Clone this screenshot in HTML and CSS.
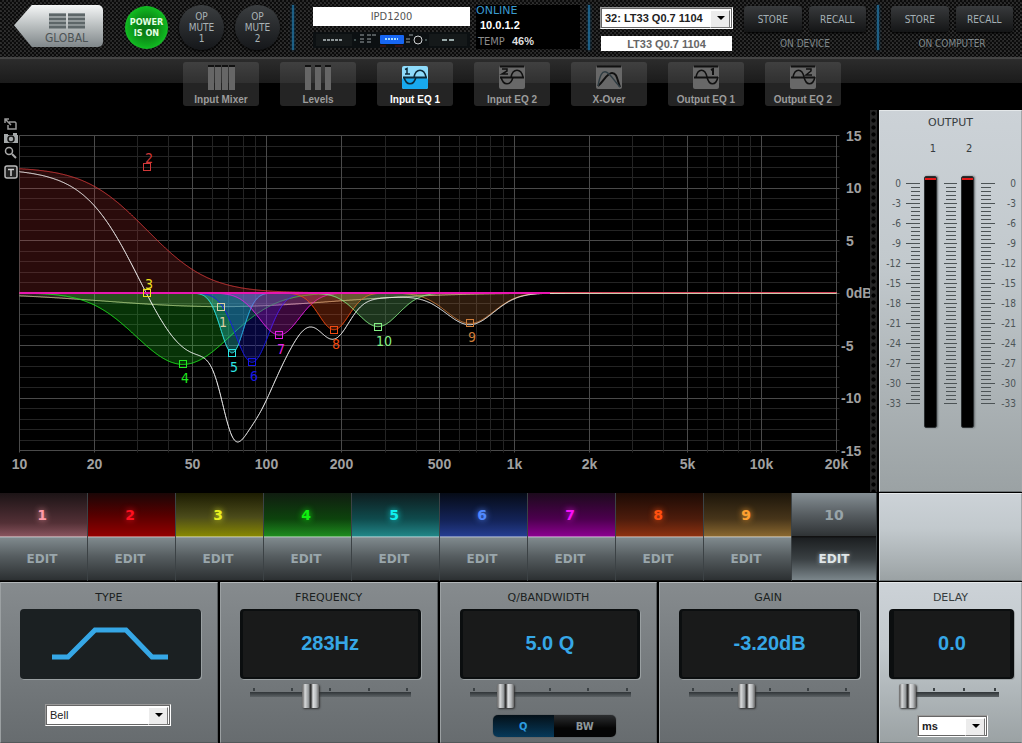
FILE: index.html
```html
<!DOCTYPE html>
<html lang="en">
<head>
  <meta charset="UTF-8">
  <meta name="viewport" content="width=device-width, initial-scale=1.0">
  <title>IPD1200 - Input EQ 1</title>
  <link rel="stylesheet" href="styles.css">
</head>
<body>
  <header class="topbar">
    <button class="global-btn" type="button">
      <svg width="36" height="16" viewBox="0 0 36 16">
        <path d="M0 2h17M19 2h17M0 6h17M19 6h17M0 10h17M19 10h17M0 14h17M19 14h17" stroke="#5d6668" stroke-width="3"/>
        <path d="M0 0.5h17M19 0.5h17" stroke="#8a9294" stroke-width="1"/>
      </svg>
      <span>GLOBAL</span>
    </button>
    <div class="power-group">
      <button class="round power" type="button">POWER<br>IS ON</button>
      <button class="round mute" type="button">OP<br>MUTE<br>1</button>
      <button class="round mute" type="button">OP<br>MUTE<br>2</button>
    </div>
    <div class="divider"></div>
    <div class="device">
      <input class="device-name" type="text" value="IPD1200" aria-label="Device name">
      <svg class="rack" viewBox="0 0 157 16">
        <rect width="157" height="16" rx="1" fill="#0c1012"/>
        <rect x="3" y="2" width="36" height="12" fill="#15191a"/>
        <rect x="116" y="2" width="38" height="12" fill="#15191a"/>
        <path d="M10 8h20" stroke="#8e9698" stroke-width="2" stroke-dasharray="3 1"/>
        <path d="M129 8h14" stroke="#9aa" stroke-width="2" stroke-dasharray="5 2"/>
        <path d="M47 3h4M54 3h4M59 3h4M47 7h4M54 7h4M47 10h4M54 10h4M96 3h4M93 7h4M93 10h4" stroke="#99a1a4" stroke-width="1"/>
        <rect x="67" y="3" width="24" height="9" rx="1" fill="#1766f2"/>
        <path d="M72 7h13" stroke="#a5ddff" stroke-width="2" stroke-dasharray="2 1"/>
        <circle cx="105" cy="8" r="4" fill="#111" stroke="#cfd3d5" stroke-width="1"/>
        <path d="M67 14h6M82 14h8" stroke="#5a1515" stroke-width="1"/>
        <circle cx="42" cy="8" r="1" fill="#566"/>
        <circle cx="113" cy="8" r="1" fill="#566"/>
      </svg>
    </div>
    <div class="status">
      <div class="online">ONLINE</div>
      <div class="address">10.0.1.2</div>
      <div class="temp">TEMP <b>46%</b></div>
    </div>
    <div class="divider"></div>
    <div class="preset">
      <div class="combo">
        <select aria-label="Preset"><option>32: LT33 Q0.7 1104</option></select>
      </div>
      <input class="preset-name" type="text" value="LT33 Q0.7 1104" aria-label="Preset name">
    </div>
    <div class="storage">
      <div class="storage-btns">
        <button type="button">STORE</button>
        <button type="button">RECALL</button>
      </div>
      <div class="storage-label">ON DEVICE</div>
    </div>
    <div class="divider"></div>
    <div class="storage">
      <div class="storage-btns">
        <button type="button">STORE</button>
        <button type="button">RECALL</button>
      </div>
      <div class="storage-label">ON COMPUTER</div>
    </div>
  </header>

  <nav class="tabs">
    <button type="button">
      <svg width="28" height="26" viewBox="0 0 28 26">
        <path d="M1 0h6v25h-6zM8 0h6v25h-6zM15 0h6v25h-6zM22 0h6v25h-6z" fill="#666"/>
        <path d="M1 1h6M8 1h6M15 1h6M22 1h6" stroke="#111" stroke-width="2"/>
      </svg>
      Input Mixer
    </button>
    <button type="button">
      <svg width="28" height="26" viewBox="0 0 28 26">
        <path d="M1 0h6v25h-6zM11 0h6v25h-6zM21 0h6v25h-6z" fill="#666"/>
        <path d="M1 1h6M11 1h6M21 1h6" stroke="#111" stroke-width="2"/>
      </svg>
      Levels
    </button>
    <button class="active" type="button">
      <svg width="26" height="26" viewBox="0 0 26 26">
        <rect y="1" width="26" height="23" rx="2" fill="#8edbfb"/>
        <rect y="13" width="26" height="11" rx="2" fill="#18a9ee"/>
        <path d="M1 12.500h24" stroke="#0c2a3a" stroke-width="2"/>
        <path d="M2 12c2 9 10 9 12 0M12 12c2-9 10-9 12 0" fill="none" stroke="#0c2a3a" stroke-width="1.500"/>
        <path d="M3 4.500l2-1v6M3 9h5" fill="none" stroke="#0c2a3a" stroke-width="1.500"/>
      </svg>
      Input EQ 1
    </button>
    <button type="button">
      <svg width="26" height="26" viewBox="0 0 26 26">
        <rect y="1" width="26" height="23" rx="2" fill="#686868"/>
        <path d="M1 1.500h24" stroke="#111" stroke-width="2"/>
        <path d="M1 12.500h24" stroke="#111" stroke-width="2"/>
        <path d="M2 12c2 9 10 9 12 0M12 12c2-9 10-9 12 0" fill="none" stroke="#111" stroke-width="1.500"/>
        <path d="M3 4h5v2L3 9h6" fill="none" stroke="#111" stroke-width="1.500"/>
      </svg>
      Input EQ 2
    </button>
    <button type="button">
      <svg width="26" height="26" viewBox="0 0 26 26">
        <rect y="1" width="26" height="23" rx="2" fill="#686868"/>
        <path d="M1 1.500h24" stroke="#111" stroke-width="2"/>
        <path d="M2 21C8 16 11 8 16 8s5 6 8 14" fill="none" stroke="#111" stroke-width="2"/>
        <path d="M2 21C4 10 6 6 10 7s9 10 14 15" fill="none" stroke="#2f3c42" stroke-width="1.500"/>
      </svg>
      X-Over
    </button>
    <button type="button">
      <svg width="26" height="26" viewBox="0 0 26 26">
        <rect y="1" width="26" height="23" rx="2" fill="#686868"/>
        <path d="M1 1.500h24" stroke="#111" stroke-width="2"/>
        <path d="M1 12.500h24" stroke="#111" stroke-width="2"/>
        <path d="M3 12c2-9 9-9 11 0c2 9 9 9 11 0" fill="none" stroke="#111" stroke-width="1.500"/>
        <path d="M18 5l2-1v6" fill="none" stroke="#111" stroke-width="2"/>
      </svg>
      Output EQ 1
    </button>
    <button type="button">
      <svg width="26" height="26" viewBox="0 0 26 26">
        <rect y="1" width="26" height="23" rx="2" fill="#686868"/>
        <path d="M1 1.500h24" stroke="#111" stroke-width="2"/>
        <path d="M1 12.500h24" stroke="#111" stroke-width="2"/>
        <path d="M3 12c2-9 9-9 11 0c2 9 9 9 11 0" fill="none" stroke="#111" stroke-width="1.500"/>
        <path d="M16 4h5v2l-5 4h6" fill="none" stroke="#111" stroke-width="1.500"/>
      </svg>
      Output EQ 2
    </button>
  </nav>

  <main class="workspace">
    <section class="graph">
      <svg id="plot" viewBox="0 0 870 382"></svg>
      <div class="tools">
        <button type="button" aria-label="Resize">
          <svg width="14" height="13" viewBox="0 0 14 13"><path d="M5 4h6l1 1v6H4V7M1 1l6 6M1 5V1h4" fill="none" stroke="#999" stroke-width="1.500"/></svg>
        </button>
        <button type="button" aria-label="Snapshot">
          <svg width="14" height="11" viewBox="0 0 14 11"><path d="M0 1h4v1h5V0h4v2h1v8H0z" fill="#a5a9aa"/><circle cx="7" cy="6" r="3" fill="#a5a9aa" stroke="#111" stroke-width="1.500"/></svg>
        </button>
        <button type="button" aria-label="Zoom">
          <svg width="14" height="13" viewBox="0 0 14 13"><circle cx="5" cy="5" r="3.500" fill="none" stroke="#aaa" stroke-width="1.500"/><path d="M8 8l4 4" stroke="#aaa" stroke-width="2"/></svg>
        </button>
        <button class="text-tool" type="button" aria-label="Labels">
          <svg width="14" height="14" viewBox="0 0 14 14"><rect x="1" y="1" width="12" height="12" rx="2" fill="#222" stroke="#bbb" stroke-width="1.500"/><path d="M4 4.500h6M7 4v7" stroke="#ccc" stroke-width="1.500"/></svg>
        </button>
      </div>
      <div class="mesh"></div>
    </section>

    <section class="panel light output">
      <h2>OUTPUT</h2>
      <div class="channels"><span>1</span><span>2</span></div>
      <div class="meters">
        <div class="db"></div>
        <div class="scale left"></div>
        <div class="meter"></div>
        <div class="scale middle"></div>
        <div class="meter"></div>
        <div class="scale right"></div>
        <div class="db"></div>
      </div>
    </section>

    <section class="bands">
      <div class="band b1"><button type="button">1</button><button class="edit" type="button">EDIT</button></div>
      <div class="band b2"><button type="button">2</button><button class="edit" type="button">EDIT</button></div>
      <div class="band b3"><button type="button">3</button><button class="edit" type="button">EDIT</button></div>
      <div class="band b4"><button type="button">4</button><button class="edit" type="button">EDIT</button></div>
      <div class="band b5"><button type="button">5</button><button class="edit" type="button">EDIT</button></div>
      <div class="band b6"><button type="button">6</button><button class="edit" type="button">EDIT</button></div>
      <div class="band b7"><button type="button">7</button><button class="edit" type="button">EDIT</button></div>
      <div class="band b8"><button type="button">8</button><button class="edit" type="button">EDIT</button></div>
      <div class="band b9"><button type="button">9</button><button class="edit" type="button">EDIT</button></div>
      <div class="band b10"><button type="button">10</button><button class="edit current" type="button">EDIT</button></div>
    </section>

    <div class="panel light"></div>

    <section class="controls">
      <div class="panel dark">
        <h2><label for="type">TYPE</label></h2>
        <div class="screen type-screen">
          <svg width="116" height="34" viewBox="0 0 116 34"><path d="M0 31h16L43 4h31l26 27h16" fill="none" stroke="#36a7e6" stroke-width="5"/></svg>
        </div>
        <div class="combo type-combo">
          <select id="type"><option>Bell</option></select>
        </div>
      </div>
      <div class="panel dark">
        <h2><label for="frequency">FREQUENCY</label></h2>
        <output class="screen" for="frequency">283Hz</output>
        <div class="slider">
          <div class="ticks"><i></i><i></i><i></i><i></i><i></i></div>
          <input id="frequency" type="range" min="0" max="100" value="36">
        </div>
      </div>
      <div class="panel dark">
        <h2><label for="q">Q/BANDWIDTH</label></h2>
        <output class="screen" for="q">5.0 Q</output>
        <div class="slider">
          <div class="ticks"><i></i><i></i><i></i><i></i><i></i></div>
          <input id="q" type="range" min="0" max="100" value="19">
        </div>
        <div class="toggle">
          <button class="on" type="button">Q</button><button type="button">BW</button>
        </div>
      </div>
      <div class="panel dark">
        <h2><label for="gain">GAIN</label></h2>
        <output class="screen" for="gain">-3.20dB</output>
        <div class="slider">
          <div class="ticks"><i></i><i></i><i></i><i></i><i></i></div>
          <input id="gain" type="range" min="0" max="100" value="34">
        </div>
      </div>
    </section>

    <section class="panel light delay">
      <h2><label for="delay">DELAY</label></h2>
      <output class="screen" for="delay">0.0</output>
      <div class="slider">
        <div class="ticks"><i></i><i></i><i></i><i></i></div>
        <input id="delay" type="range" min="0" max="100" value="0">
      </div>
      <div class="combo delay-combo">
        <select aria-label="Delay unit"><option>ms</option></select>
      </div>
    </section>
  </main>

  <script src="graph.js"></script>
</body>
</html>
```

FILE: graph.js
```js
const LEFT = 19.5, RIGHT = 836.5, TOP = 25.5, BOTTOM = 340.5;
const DECADE = (RIGHT - LEFT) / Math.log10(2000);
const PX_DB = (BOTTOM - TOP) / 30;

const xOf = f => LEFT + DECADE * Math.log10(f / 10);
const yOf = db => TOP + (15 - db) * PX_DB;

// width is the spread of the bell in decades
const bands = [
  { n: 1, freq: 65, gain: -1.3, width: 0.46, color: "#dccfa5", fill: 0.18, label: [2, 20] },
  { n: 2, freq: 32.7, gain: 12, shelf: true, color: "#d03838", fill: 0.2, label: [2, -4] },
  { n: 3, freq: 32.7, gain: 0, width: 0.1, color: "#f0e020", fill: 0, label: [2, -4] },
  { n: 4, freq: 45.8, gain: -6.8, width: 0.19, color: "#1fe81f", fill: 0.22, label: [2, 19] },
  { n: 5, freq: 72.3, gain: -5.7, width: 0.046, color: "#2ce6e6", fill: 0.3, label: [2, 19] },
  { n: 6, freq: 87, gain: -6.6, width: 0.066, color: "#1818e8", fill: 0.25, label: [2, 19] },
  { n: 7, freq: 112, gain: -4, width: 0.08, color: "#e81ee8", fill: 0.25, label: [2, 19] },
  { n: 8, freq: 186.5, gain: -3.5, width: 0.06, color: "#f04a12", fill: 0.28, label: [2, 19] },
  { n: 9, freq: 661, gain: -2.9, width: 0.096, color: "#cf7d3a", fill: 0.22, label: [2, 19] },
  { n: 10, freq: 281, gain: -3.2, width: 0.083, color: "#86f086", fill: 0.22, label: [6, 19], off: true }
];

function response(band, f) {
  if (band.shelf) {
    const A = Math.pow(10, band.gain / 40);
    const w2 = Math.pow(f / band.freq, 2);
    const mid = A / 0.49 * w2;
    return 10 * Math.log10(A * A * (Math.pow(A - w2, 2) + mid) / (Math.pow(1 - A * w2, 2) + mid));
  }
  const d = Math.log10(f / band.freq) / band.width;
  return band.gain * Math.exp(-d * d / 2);
}

function curve(fn) {
  const points = [];
  for (let x = LEFT; x <= RIGHT; x += 1) {
    const f = 10 * Math.pow(10, (x - LEFT) / DECADE);
    points.push(`${x},${yOf(fn(f)).toFixed(1)}`);
  }
  return points.join(" ");
}

let svg = "";
const line = (x1, y1, x2, y2, cls) => {
  svg += `<line x1="${x1}" y1="${y1}" x2="${x2}" y2="${y2}" class="${cls}"/>`;
};

for (let db = -15; db <= 15; db++) {
  const y = Math.floor(yOf(db)) + 0.5;
  line(LEFT, y, RIGHT + 3, y, db % 5 ? "grid" : "grid major");
}

const labelled = { 10: "10", 20: "20", 50: "50", 100: "100", 200: "200", 500: "500",
  1000: "1k", 2000: "2k", 5000: "5k", 10000: "10k", 20000: "20k" };
for (let decade = 10; decade <= 10000; decade *= 10) {
  for (let m = 1; m < 10; m++) {
    const f = decade * m;
    if (f > 20000) break;
    const x = Math.floor(xOf(f)) + 0.5;
    line(x, TOP, x, BOTTOM + 2, labelled[f] ? "grid major" : "grid");
    if (labelled[f]) svg += `<text x="${x}" y="359" class="axis freq">${labelled[f]}</text>`;
  }
}

for (let db = -15; db <= 15; db += 5) {
  const label = db === 0 ? "0dB" : db;
  svg += `<text x="${db < 0 ? 841 : 846}" y="${yOf(db) + 5}" class="axis">${label}</text>`;
}

bands.forEach(b => {
  const pts = curve(f => response(b, f));
  svg += `<polygon points="${LEFT},${yOf(0)} ${pts} ${RIGHT},${yOf(0)}" fill="${b.color}" fill-opacity="${b.fill}"/>`;
  svg += `<polyline points="${pts}" class="curve" stroke="${b.color}"/>`;
});

// bypassed bands are drawn but do not count in the sum
const active = bands.filter(b => !b.off);
svg += `<polyline points="${curve(f => active.reduce((sum, b) => sum + response(b, f), 0))}" class="curve total"/>`;
line(LEFT, 182.5, RIGHT, 182.5, "zero");
line(LEFT, 183, 550, 183, "zero hot");

bands.forEach(b => {
  const x = Math.round(xOf(b.freq)), y = Math.round(yOf(b.gain));
  svg += `<rect x="${x - 3.5}" y="${y - 3.5}" width="7" height="7" class="handle" stroke="${b.color}"/>`;
  svg += `<text x="${x + b.label[0]}" y="${y + b.label[1]}" class="band-no" fill="${b.color}">${b.n}</text>`;
});

document.getElementById("plot").innerHTML = svg;

document.querySelectorAll(".db").forEach(el => {
  for (let db = 0; db >= -33; db -= 3) {
    const span = document.createElement("span");
    span.textContent = db;
    el.appendChild(span);
  }
});
```

FILE: styles.css
```css
* {
  box-sizing: border-box;
}
body {
  margin: 0;
  min-height: 100vh;
  display: flex;
  flex-direction: column;
  background: #000;
  color: #aab0b2;
  font-family: "DejaVu Sans Condensed", "DejaVu Sans", sans-serif;
  font-size: 11px;
}
button, select, input {
  font: inherit;
  color: inherit;
  margin: 0;
  padding: 0;
  border: 0;
}
button {
  background: none;
  cursor: pointer;
}
h2 {
  margin: 0;
  font: 11px/15px "DejaVu Sans", sans-serif;
  text-align: center;
}

/* top bar */
.topbar {
  display: flex;
  align-items: flex-start;
  height: 57px;
  padding: 5px 9px 0 14px;
  background-color: #0b0b0b;
  background-image:
    linear-gradient(45deg, #2e2e2e 25%, transparent 25%, transparent 75%, #2e2e2e 75%),
    linear-gradient(45deg, #242424 25%, transparent 25%, transparent 75%, #242424 75%);
  background-size: 4px 4px;
  background-position: 0 0, 2px 2px;
}
.global-btn {
  width: 89px;
  height: 42px;
  margin-right: 22px;
  padding: 4px 0 0 16px;
  border-radius: 5px;
  background: linear-gradient(#f4f6f6, #b9bebf 50%, #80878a);
  clip-path: polygon(0 48%, 20% 0, 100% 0, 100% 100%, 20% 100%);
  color: #4c5355;
  font-size: 12px;
  line-height: 14px;
}
.global-btn svg, .global-btn span {
  display: block;
  margin: 2px auto 0;
}
.power-group {
  display: flex;
  align-items: center;
  gap: 11px;
  margin-right: 12px;
}
.round {
  width: 45px;
  height: 45px;
  border-radius: 50%;
  line-height: 11px;
}
.power {
  width: 43px;
  height: 43px;
  background: radial-gradient(#0a7a14 20%, #0fae1e 60%, #1fe534);
  color: #e3ffe3;
  font-size: 9px;
  font-weight: bold;
}
.mute {
  background: linear-gradient(#3b3e40, #15171a);
  box-shadow: 0 1px 3px #000;
  color: #a9b3b6;
  font-size: 10px;
}
.divider {
  width: 2px;
  height: 45px;
  background: #1d5f85;
  box-shadow: 0 0 3px #0d4a70;
}
.device {
  flex: 1;
  margin: 2px 6px 0 19px;
}
.device-name {
  display: block;
  width: 100%;
  height: 19px;
  background: #fff;
  color: #555;
  text-align: center;
}
.rack {
  display: block;
  width: 100%;
  margin-top: 6px;
}
.status {
  width: 104px;
  height: 44px;
  margin-right: 8px;
  background: #000;
  line-height: 15px;
}
.online {
  height: 12px;
  line-height: 12px;
  color: #3a9bd0;
  font-family: "DejaVu Sans", sans-serif;
}
.address {
  padding: 1px 0 0 4px;
  color: #fff;
  font: bold 11px/15px "Liberation Sans", sans-serif;
}
.temp {
  padding: 1px 0 0 2px;
  color: #8b8b8b;
}
.temp b {
  margin-left: 4px;
  color: #ddd;
  font: bold 11px "Liberation Sans", sans-serif;
}
.preset {
  width: 133px;
  margin: 2px 11px 0 10px;
}
.combo {
  position: relative;
  border: 1px solid #999;
  border-right-color: #fff;
  border-bottom-color: #fff;
}
.combo select {
  display: block;
  width: 100%;
  height: 20px;
  padding: 0 20px 0 3px;
  appearance: none;
  border: 1px solid #666;
  border-radius: 0;
  background: #fff;
  color: #222;
  font: 11px "Liberation Sans", sans-serif;
}
.combo::before {
  content: "";
  position: absolute;
  top: 2px;
  right: 2px;
  width: 18px;
  height: 16px;
  background: #ececec;
  border: 1px solid;
  border-color: #fff #777 #777 #fff;
  pointer-events: none;
}
.combo::after {
  content: "";
  position: absolute;
  top: 8px;
  right: 7px;
  border: 4px solid transparent;
  border-top-color: #000;
  border-bottom: 0;
  pointer-events: none;
}
.preset select {
  font-weight: bold;
}
.preset-name {
  display: block;
  width: 131px;
  height: 15px;
  margin: 7px auto 0;
  background: #fff;
  color: #666;
  text-align: center;
  font: bold 11px "Liberation Sans", sans-serif;
}
.storage {
  width: 122px;
  margin: 1px 0 0;
  text-align: center;
}
.storage + .divider {
  margin: 0 12px 0 11px;
}
.storage-btns {
  display: flex;
  gap: 7px;
}
.storage-btns button {
  flex: 1;
  height: 26px;
  border-radius: 4px;
  background: linear-gradient(#383a3c, #141516);
  box-shadow: 0 1px 2px #000;
  color: #a4b0b5;
  font-size: 10px;
}
.storage-label {
  margin-top: 5px;
  color: #7e878a;
  font-size: 10px;
  line-height: 13px;
}

/* tabs */
.tabs {
  display: flex;
  justify-content: center;
  gap: 21px;
  height: 53px;
  padding: 3px 0 0 2px;
  border-top: 2px solid #444;
  background: linear-gradient(#2c2c2c, #1b1b1b 24px, #000 24px);
}
.tabs button {
  display: flex;
  flex-direction: column;
  align-items: center;
  width: 76px;
  height: 44px;
  padding-top: 3px;
  border-radius: 3px;
  background: linear-gradient(#404040, #303030 21px, #242424 21px);
  color: #9c9c9c;
  font: bold 10px/14px "Liberation Sans", sans-serif;
  white-space: nowrap;
}
.tabs svg {
  flex: none;
  margin-bottom: 2px;
}
.tabs .active {
  color: #fff;
}

/* main area */
.workspace {
  flex: 1;
  display: grid;
  grid-template-columns: minmax(0, 1fr) 143px;
  grid-template-rows: auto 88px minmax(161px, 1fr);
  gap: 1px 2px;
}
.panel {
  border: 1px solid;
}
.light {
  background: linear-gradient(#ccd2d7, #c2c9cd 40%, #9ba2a4);
  border-color: #e4e8ea #a0a6a8 #6c7274 #d8dcde;
  color: #363c3e;
}
.dark {
  background: linear-gradient(#868b8e, #676c6f);
  border-color: #b4b8ba #54585a #54585a #9ba0a2;
  color: #1b1f21;
}
.graph {
  position: relative;
  display: flex;
}
#plot {
  flex: 1;
  min-width: 0;
  display: block;
  overflow: hidden;
}
.mesh {
  width: 7px;
  background: radial-gradient(#000 35%, #262626 50%) 0 0 / 7px 7px;
}
.grid {
  stroke: #242424;
}
.grid.major {
  stroke: #4a4a4a;
}
.axis {
  fill: #a0a0a0;
  font: bold 14px "Liberation Sans", sans-serif;
}
.freq {
  text-anchor: middle;
}
.curve {
  fill: none;
  stroke-width: 1;
}
.total {
  stroke: #fff;
}
.zero {
  stroke: #d04058;
}
.zero.hot {
  stroke: #e816b0;
  stroke-width: 2;
}
.handle {
  fill: none;
}
.band-no {
  text-anchor: middle;
  font-size: 14px;
}
.tools {
  position: absolute;
  top: 8px;
  left: 4px;
  display: flex;
  flex-direction: column;
  gap: 2px;
}
.tools button, .tools svg {
  display: block;
}
.text-tool {
  margin-top: 4px;
}

/* output meters */
.output {
  padding-top: 4px;
}
.channels {
  display: flex;
  justify-content: center;
  gap: 30px;
  margin: 11px 0 20px;
  padding-left: 1px;
  line-height: 15px;
}
.meters {
  display: flex;
  justify-content: center;
  padding-right: 5px;
  color: #4d5558;
}
.db {
  width: 22px;
  margin-top: -2px;
  text-align: right;
  font-size: 10px;
}
.db span {
  display: block;
  height: 20px;
  line-height: 20px;
}
.scale {
  height: 221px;
  margin-top: 7px;
  background-image:
    repeating-linear-gradient(#4c5355 0 1px, transparent 1px 20px),
    repeating-linear-gradient(#4c5355 0 1px, transparent 1px 4px);
  background-repeat: no-repeat;
}
.left {
  width: 15px;
  margin: 7px 4px 0 5px;
  background-size: 15px 100%, 10px 100%;
  background-position: 0 0, 5px 0;
}
.middle {
  width: 14px;
  margin: 7px 4px 0 7px;
  background-size: 14px 100%, 10px 100%;
  background-position: 0 0, 2px 0;
}
.right {
  width: 15px;
  margin: 7px 0 0 7px;
  background-size: 15px 100%, 10px 100%;
}
.meter {
  width: 13px;
  height: 252px;
  border: 1px solid #2b2f31;
  border-radius: 2px;
  background: linear-gradient(#222 1px, #e01818 1px 3px, #000 3px);
  box-shadow: 1px 0 2px #6a7072;
}

/* bands */
.bands {
  display: grid;
  grid-template-columns: repeat(9, 88fr) 85fr;
}
.band {
  display: grid;
  grid-template-rows: 44px 44px;
  border-right: 1px solid #3c4245;
}
.band button {
  padding-right: 3px;
  border-bottom: 1px solid #ffffff66;
  font: bold 14px "DejaVu Sans", sans-serif;
  text-shadow: 0 0 6px currentColor;
}
.band .edit {
  border-bottom: 1px solid #111;
  border-top: 1px solid #9aa4a8;
  background: linear-gradient(#7f898d, #555c5f 45%, #2c3032);
  color: #9aa6ab;
  font-size: 12px;
  text-shadow: none;
}
.b1 { color: #ff9aa8; background: linear-gradient(#1c1416, #533036 30px, #8c5660 44px); }
.b2 { color: #ff1020; background: linear-gradient(#1a0606, #560000 22px, #960000 44px); }
.b3 { color: #e8f020; background: linear-gradient(#1c1c02, #4b4b1a 24px, #8a8a00 44px); }
.b4 { color: #10f010; background: linear-gradient(#101c10, #0d430d 26px, #1f8f1f 44px); }
.b5 { color: #10f0f0; background: linear-gradient(#0e1c1e, #0f4b4d 26px, #22898a 44px); }
.b6 { color: #5088ff; background: linear-gradient(#060b16, #14245a 28px, #263f94 44px); }
.b7 { color: #f810f8; background: linear-gradient(#1c0a1c, #4c004e 26px, #8e0092 44px); }
.b8 { color: #ff5010; background: linear-gradient(#1c0a04, #4d1c0c 26px, #903210 44px); }
.b9 { color: #ffa030; background: linear-gradient(#1c150a, #47351a 26px, #8d6a30 44px); }
.b10 { color: #98a4a9; background: linear-gradient(#858f94, #565c60 22px, #2d3133 44px); }
.b10 button {
  padding: 0;
  border-bottom-color: #111;
  text-shadow: none;
}
.band .current {
  border-top-color: #151719;
  background: linear-gradient(#1c1f21, #3a4043 50%, #7b868b);
  color: #e0e6e8;
  text-shadow: 0 0 4px #aab4b8;
}

/* controls */
.controls {
  display: grid;
  grid-template-columns: repeat(4, 1fr);
  gap: 2px;
}
.controls .panel, .delay {
  padding-top: 7px;
}
.screen {
  display: flex;
  align-items: center;
  justify-content: center;
  height: 70px;
  margin: 4px 16px 0 19px;
  padding-bottom: 2px;
  border: 2px solid #0b0e0f;
  border-right-width: 3px;
  border-left-width: 3px;
  border-radius: 4px;
  background: #191a1a;
  box-shadow: 1px 1px 0 #9aa0a2;
  color: #36a7e6;
  font: bold 20px "Liberation Sans", sans-serif;
}
.type-screen {
  border-color: #1b2022;
  background: #1b2022;
}
.slider {
  width: 161px;
  margin-left: 29px;
  padding-top: 9px;
}
.ticks {
  display: flex;
  justify-content: space-between;
  height: 3px;
  margin: 0 3px -7px;
}
.ticks i {
  width: 2px;
  background: #3b4144;
}
.slider input {
  display: block;
  width: 100%;
  height: 24px;
  appearance: none;
  background: linear-gradient(#303538, #5c6265) 0 8px / 100% 5px no-repeat;
}
.slider input::-webkit-slider-thumb {
  appearance: none;
  width: 17px;
  height: 24px;
  border-radius: 2px;
  background: linear-gradient(90deg, #777 1px, #d8dadb 3px, #8c9092 7px, #333 8px, #333 9px, #dfe1e2 11px, #b9bcbe 14px, #666 17px);
  box-shadow: 1px 1px 2px #333;
}
.type-combo {
  width: 126px;
  margin: 25px 0 0 44px;
}
.toggle {
  display: flex;
  width: 123px;
  height: 22px;
  margin: 7px 0 0 52px;
  border-radius: 5px;
  overflow: hidden;
  box-shadow: 0 0 1px #222;
}
.toggle button {
  flex: 1;
  background: linear-gradient(#2c2e30, #050505 60%);
  color: #8d979b;
  font-size: 11px;
  font-weight: bold;
}
.toggle .on {
  background: linear-gradient(#041018, #06395a);
  color: #2c9ce0;
}
.delay .screen {
  margin: 4px 7px 0 9px;
  border-left-width: 5px;
  border-right-width: 4px;
}
.delay .slider {
  width: 100px;
  margin-left: 19px;
}
.delay-combo {
  width: 71px;
  margin: 7px 0 0 37px;
}
.delay-combo select {
  font-weight: bold;
}
```
